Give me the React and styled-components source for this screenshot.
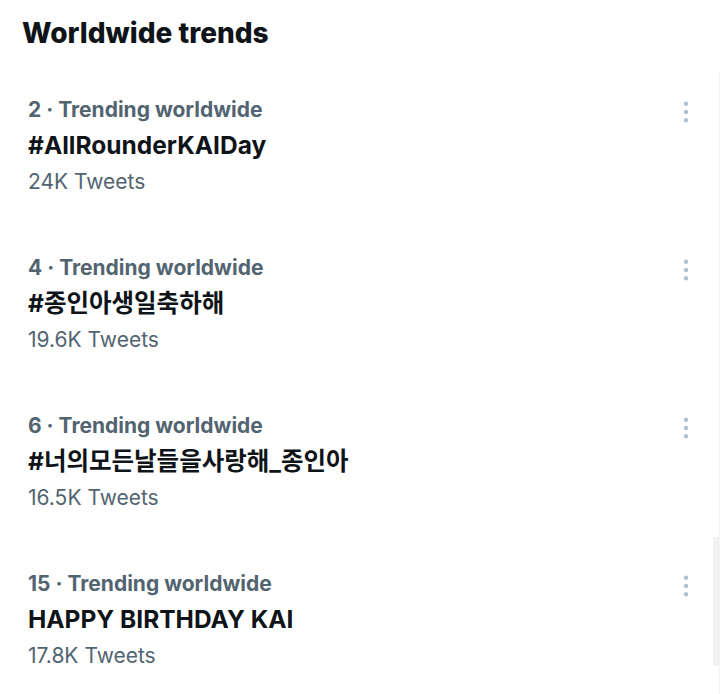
import styled, { createGlobalStyle } from 'styled-components';

const GlobalStyle = createGlobalStyle`
    body {
        margin: 0;
        background: #ffffff;
        font-family: Inter, "Noto Sans CJK KR", sans-serif;
    }
`;

const trends = [
    { rank: 2, name: '#AllRounderKAIDay', count: '24K' },
    { rank: 4, name: '#종인아생일축하해', count: '19.6K' },
    { rank: 6, name: '#너의모든날들을사랑해_종인아', count: '16.5K' },
    { rank: 15, name: 'HAPPY BIRTHDAY KAI', count: '17.8K' },
];

function App() {
    return (
        <Page>
            <GlobalStyle />
            <Title>Worldwide trends</Title>
            <List>
                {trends.map((t) => (
                    <Row key={t.rank}>
                        <Info>
                            <Meta>{t.rank} · Trending worldwide</Meta>
                            <Name>{t.name}</Name>
                            <Count>{t.count} Tweets</Count>
                        </Info>
                        <MoreButton>
                            <svg width="6" height="22" viewBox="0 0 6 22">
                                <circle cx="3" cy="2.7" r="2.2" />
                                <circle cx="3" cy="11" r="2.2" />
                                <circle cx="3" cy="19.3" r="2.2" />
                            </svg>
                        </MoreButton>
                    </Row>
                ))}
            </List>
            <Scrollbar />
        </Page>
    );
}

const Page = styled.div`
    position: relative;
    width: 720px;
    height: 694px;
    overflow: hidden;
`;

const Title = styled.h2`
    margin: 0;
    padding: 14px 0 0 22px;
    font-size: 28px;
    font-weight: 800;
    line-height: 38px;
    color: #0f1419;
`;

const List = styled.div`
    margin-top: 20px;
    padding-top: 21px;
    border-right: 1px solid #f3f3f3;
    height: 640px;
`;

const Row = styled.div`
    display: flex;
    justify-content: space-between;
    padding: 0 30px 0 28px;
    height: 158px;
`;

const Info = styled.div`
    display: flex;
    flex-direction: column;
`;

const Meta = styled.div`
    font-size: 21px;
    font-weight: 700;
    line-height: 33px;
    color: #536471;
`;

const Name = styled.div`
    font-size: 24.5px;
    font-weight: 700;
    line-height: 38px;
    color: #0f1419;
`;

const Count = styled.div`
    font-size: 21px;
    font-weight: 400;
    line-height: 35px;
    color: #536471;
`;

const MoreButton = styled.div`
    padding-top: 8px;
    fill: #b3c1cc;
`;

const Scrollbar = styled.div`
    position: absolute;
    right: 0;
    top: 537px;
    width: 7px;
    height: 129px;
    background: #f2f2f2;
`;

export default App;
